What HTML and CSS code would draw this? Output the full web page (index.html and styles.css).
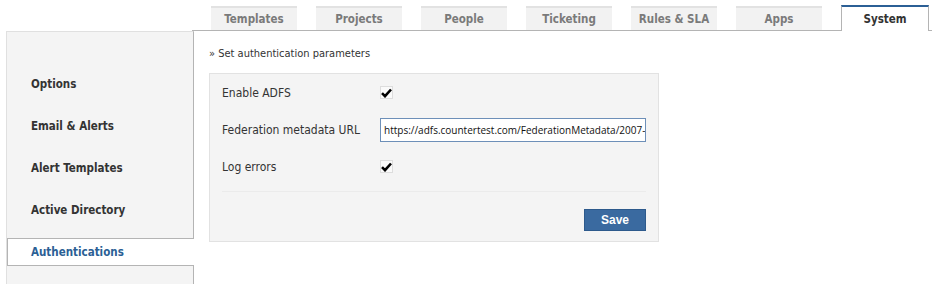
FILE: index.html
```html
<!DOCTYPE html>
<html>
<head>
<meta charset="utf-8">
<link rel="stylesheet" href="styles.css">
</head>
<body>
<div class="tabbar">
  <div class="tab">Templates</div>
  <div class="tab">Projects</div>
  <div class="tab">People</div>
  <div class="tab">Ticketing</div>
  <div class="tab">Rules &amp; SLA</div>
  <div class="tab">Apps</div>
  <div class="tab active">System</div>
</div>
<div class="layout">
  <div class="sidebar">
    <div class="item">Options</div>
    <div class="item">Email &amp; Alerts</div>
    <div class="item">Alert Templates</div>
    <div class="item">Active Directory</div>
    <div class="item active">Authentications</div>
  </div>
  <div class="main">
    <div class="crumb">» Set authentication parameters</div>
    <div class="panel">
      <div class="row">
        <div class="label">Enable ADFS</div>
        <span class="check"><svg width="11" height="10" viewBox="0 0 11 10"><path d="M1 5.2 L4 8.2 L10 1.5" fill="none" stroke="#000" stroke-width="2.6"/></svg></span>
      </div>
      <div class="row">
        <div class="label">Federation metadata URL</div>
        <input class="input" type="text" readonly value="https://adfs.countertest.com/FederationMetadata/2007-06/FederationMetadata.xml">
      </div>
      <div class="row">
        <div class="label">Log errors</div>
        <span class="check"><svg width="11" height="10" viewBox="0 0 11 10"><path d="M1 5.2 L4 8.2 L10 1.5" fill="none" stroke="#000" stroke-width="2.6"/></svg></span>
      </div>
      <div class="sep"></div>
      <div class="actions"><button class="save">Save</button></div>
    </div>
  </div>
</div>
</body>
</html>
```
FILE: styles.css
```css
html, body { margin: 0; padding: 0; background: #fff; }
body { font-family: "DejaVu Sans Condensed", "DejaVu Sans", Verdana, sans-serif; font-size: 12px; color: #333; height: 284px; overflow: hidden; }
.tabbar { margin-left: 192px; border-bottom: 1px solid #b4b4b4; display: flex; align-items: flex-end; padding-left: 19px; gap: 19px; box-sizing: border-box; height: 31px; }
.tab { width: 86px; height: 22px; border-top: 2px solid #e2e2e2; background: #f2f2f2; color: #7a7a7a; font-weight: bold; font-size: 11.5px; display: flex; align-items: center; justify-content: center; }
.tab.active { background: #fff; color: #333; border-top: 2px solid #2b5f95; border-left: 1px solid #b4b4b4; border-right: 1px solid #b4b4b4; height: 24px; margin-bottom: -1px; }
.layout { display: flex; }
.sidebar { margin-left: 6px; width: 188px; height: 253px; background: #f4f4f4; border-left: 1px solid #e0e0e0; border-top: 1px solid #e0e0e0; border-right: 1px solid #b4b4b4; box-sizing: border-box; padding-top: 38px; display: flex; flex-direction: column; gap: 14px; }
.item { height: 28px; flex: none; display: flex; align-items: center; padding-left: 24px; font-weight: bold; color: #333; font-size: 11.5px; }
.item.active { background: #fff; color: #2b5f95; border: 1px solid #b4b4b4; border-right: none; height: 26px; margin-right: -1px; padding-left: 23px; }
.main { padding-left: 15px; padding-top: 15px; }
.crumb { height: 16px; line-height: 16px; font-size: 11px; color: #333; }
.panel { margin-top: 11px; width: 424px; background: #f4f4f4; border: 1px solid #e2e2e2; padding: 0 12px 10px 12px; }
.row { display: flex; align-items: center; height: 37px; }
.label { width: 158px; flex: none; font-size: 12px; color: #333; }
.check { width: 13px; height: 13px; border: 1px solid #ddd; background: #fafafa; box-sizing: border-box; display: flex; align-items: center; justify-content: center; }
.input { width: 266px; height: 24px; box-sizing: border-box; margin: 0; border: 1px solid #6d8fb8; border-radius: 0; outline: none; background: #fff; font-family: "Open Sans", sans-serif; font-size: 10px; padding: 0 0 0 3px; color: #111; }
.sep { height: 1px; background: #ebebeb; margin-top: 6px; }
.actions { display: flex; justify-content: flex-end; margin-top: 17px; }
.save { width: 62px; height: 22px; background: #3a6aa0; color: #fff; border: 1px solid #2d5a8c; font-family: "Liberation Sans", Arial, sans-serif; font-weight: bold; font-size: 12px; padding: 0; }
```
